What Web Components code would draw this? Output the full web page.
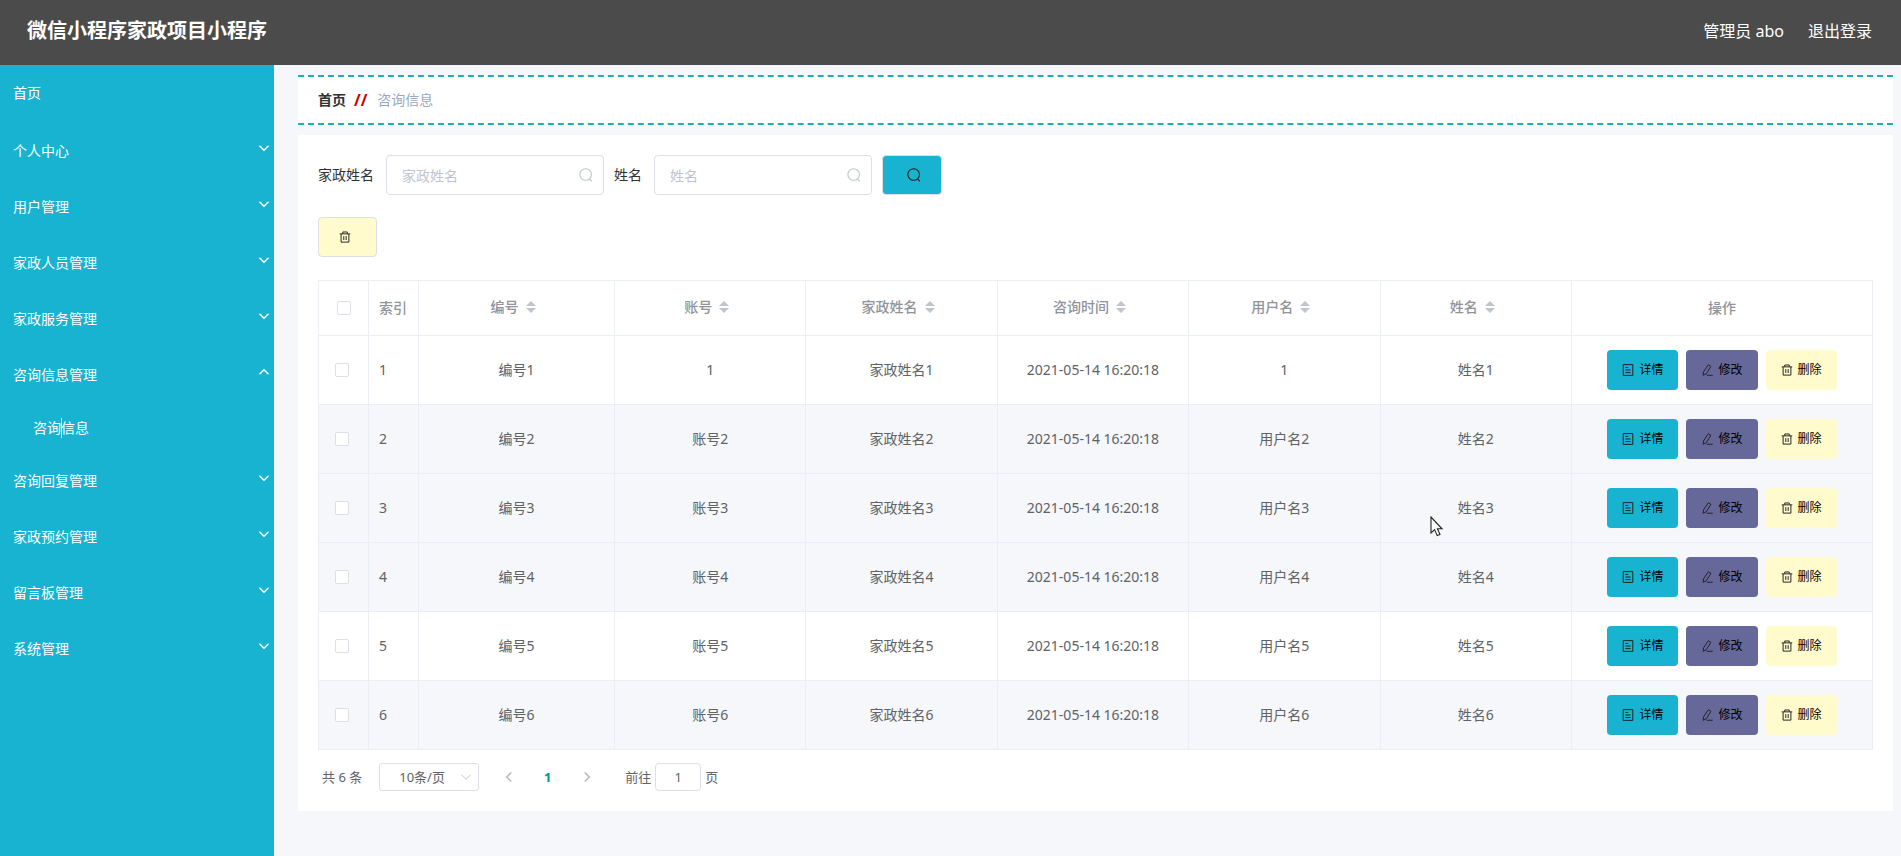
<!DOCTYPE html>
<html lang="zh-CN">
<head>
<meta charset="utf-8">
<title>咨询信息</title>
<style>
html,body{margin:0;height:100%}
body{font-family:"Noto Sans","Noto Sans CJK SC",sans-serif;font-size:14px;color:#303133;background:#f5f7fa}
</style>
</head>
<body>
<admin-app></admin-app>
<script>
const ICONS = {
  search: '<circle cx="7.6" cy="7.4" r="6.6"/><path d="M11.8 12.2l2.8 3"/>',
  trash: '<path d="M1 3.8h14M5 3.6V1.3h6v2.3M2.8 4v10.8h10.4V4M6.4 6.8v5.2M9.6 6.8v5.2"/>',
  doc: '<path d="M1.6.8h12.8v14.4H1.6zM4.6 4.6h3.6M4.6 8h6.8M4.6 11.4h6.8"/>',
  edit: '<path d="M9.8 1l3.4 2.2-6.2 9.8-4.2 2 .6-4.6zM7.6 15h8"/>',
  down: '<path d="M2 5l6 6 6-6"/>',
  up: '<path d="M2 11l6-6 6 6"/>',
  left: '<path d="M11 2L5 8l6 6"/>',
  right: '<path d="M5 2l6 6-6 6"/>'
};
function define(name, html, setup) {
  const template = document.createElement('template');
  customElements.define(name, class extends HTMLElement {
    connectedCallback() {
      if (this.shadowRoot) return;
      template.innerHTML = typeof html === 'function' ? html(this) : html;
      this.attachShadow({mode: 'open'}).append(template.content.cloneNode(true));
      if (setup) setup(this, this.shadowRoot);
    }
  });
}

define('ui-icon', el => `<style>
:host{display:inline-flex;width:12px;height:12px;flex:none}
svg{width:100%;height:100%;fill:none;stroke:currentColor;stroke-width:1.3}
:host([bold]) svg{stroke-width:2}
</style><svg viewBox="0 0 16 16" aria-hidden="true">${ICONS[el.getAttribute('name')]}</svg>`);

define('ui-button', el => `<style>
:host{display:inline-flex}
button{display:flex;align-items:center;justify-content:center;gap:5px;height:40px;padding:0 15px;border:0;border-radius:4px;font:12px/20px "Noto Sans","Noto Sans CJK SC",sans-serif;color:#000;background:#17b3d1;cursor:pointer;white-space:nowrap}
:host([kind=edit]) button{background:#666899}
:host([kind=delete]) button{background:#fffbcc}
:host([square]) button{padding:0 20px;width:59px;border:1px solid #dcdfe6}
:host([square][kind=delete]) button{justify-content:flex-start}
:host([square][kind=view]) button{justify-content:flex-end;width:60px}
:host([square][kind=view]) ui-icon{width:14px;height:14px}
ui-icon{color:#222}
</style><button type="button" aria-label="${el.getAttribute('label') || el.textContent}"><ui-icon name="${el.getAttribute('icon')}"></ui-icon><slot></slot></button>`);

define('app-header', `<style>
:host{display:flex;align-items:center;justify-content:space-between;height:65px;padding:0 29px 4px 27px;box-sizing:border-box;background:#4b4b4b;color:#fff}
h1{margin:0;font-size:20px;line-height:28px}
nav{display:flex;gap:24px;font-size:16px;line-height:24px}
a{color:inherit;text-decoration:none}
</style><h1>微信小程序家政项目小程序</h1><nav><span>管理员 abo</span><a href="#logout">退出登录</a></nav>`);

define('menu-item', el => `<style>
:host{display:block}
a{display:flex;align-items:center;justify-content:space-between;height:56px;padding:0 4px 0 13px;color:#fff;text-decoration:none;line-height:20px}
:host([sub]) a{height:50px;padding-left:33px}
ui-icon{margin-bottom:6px}
</style><a href="#menu"><slot></slot>${el.hasAttribute('arrow') ? `<ui-icon name="${el.getAttribute('arrow')}" bold></ui-icon>` : ''}</a>`);

define('side-menu', `<style>
:host{display:block;background:#17b3d1}
nav{display:flex;flex-direction:column}
.home{margin-bottom:2px}
.sub{position:relative}
.caret{position:absolute;left:61px;top:15px;width:1px;height:20px;background:#d8f4fa}
</style><nav>
<menu-item class="home">首页</menu-item>
<menu-item arrow="down">个人中心</menu-item>
<menu-item arrow="down">用户管理</menu-item>
<menu-item arrow="down">家政人员管理</menu-item>
<menu-item arrow="down">家政服务管理</menu-item>
<menu-item arrow="up">咨询信息管理</menu-item>
<div class="sub"><menu-item sub>咨询信息</menu-item><span class="caret"></span></div>
<menu-item arrow="down">咨询回复管理</menu-item>
<menu-item arrow="down">家政预约管理</menu-item>
<menu-item arrow="down">留言板管理</menu-item>
<menu-item arrow="down">系统管理</menu-item>
</nav>`);

define('bread-crumb', `<style>
:host{display:flex;align-items:center;height:50px;box-sizing:border-box;padding:0 20px;background:#fff;border-top:2px dashed #17b3b3;border-bottom:2px dashed #17b3b3;line-height:20px}
a{color:#303133;font-weight:700;text-decoration:none}
b{color:#c00;font-size:16px;margin:0 10px 0 8px}
span{color:#97a8be}
</style><a href="#home">首页</a><b>//</b><span>咨询信息</span>`);

define('search-field', el => `<style>
:host{display:flex;align-items:center;gap:12px}
label{line-height:20px;white-space:nowrap}
.box{display:flex;align-items:center;width:218px;height:40px;box-sizing:border-box;border:1px solid #dcdfe6;border-radius:4px;padding:0 10px 0 15px;background:#fff}
input{flex:1;min-width:0;padding:0;border:0;outline:0;background:none;font:inherit;color:#606266}
input::placeholder{color:#c0c4cc;opacity:1}
ui-icon{width:14px;height:14px;color:#c0c4cc}
</style><label for="q">${el.getAttribute('label')}</label><div class="box"><input id="q" type="text" placeholder="${el.getAttribute('label')}"><ui-icon name="search"></ui-icon></div>`);

const heads = ['编号', '账号', '家政姓名', '咨询时间', '用户名', '姓名'];
const rows = [1, 2, 3, 4, 5, 6].map(n => [`编号${n}`, n === 1 ? '1' : `账号${n}`, `家政姓名${n}`, '2021-05-14 16:20:18', n === 1 ? '1' : `用户名${n}`, `姓名${n}`]);
define('data-table', `<style>
:host{display:block}
table{width:100%;table-layout:fixed;border-spacing:0;border:solid #ebeef5;border-width:1px 0 0 1px;color:#606266;line-height:22px;box-sizing:border-box}
th,td{box-sizing:border-box;border:solid #ebeef5;border-width:0 1px 1px 0;padding:0;text-align:center}
th{height:55px;color:#909399;font-weight:500}
td{height:69px}
tr.shade td{background:#f5f7fa}
.index{text-align:left;padding-left:10px}
td.pick{padding-right:4px}
.check{width:50px}.number{width:196px}.ops{width:301px}
input{appearance:none;display:block;width:14px;height:14px;margin:0 auto;border:1px solid #dcdfe6;border-radius:2px;background:#fff}
.head{display:flex;align-items:center;justify-content:center;padding-bottom:2px}
.sort{display:flex;flex-direction:column;gap:2px;width:24px;align-items:center}
.sort i{border:5px solid transparent}
.sort i:first-child{border-top:0;border-bottom-color:#c0c4cc}
.sort i:last-child{border-bottom:0;border-top-color:#c0c4cc}
.actions{display:flex;justify-content:center;gap:8px}
</style><table><colgroup><col class="check"><col class="check"><col class="number"><col><col><col><col><col><col class="ops"></colgroup>
<thead><tr><th><input type="checkbox" aria-label="全选"></th><th class="index">索引</th>${heads.map(h => `<th><div class="head">${h}<span class="sort"><i></i><i></i></span></div></th>`).join('')}<th>操作</th></tr></thead>
<tbody>${rows.map((r, i) => `<tr class="${[1, 2, 3, 5].includes(i) ? 'shade' : ''}"><td class="pick"><input type="checkbox" aria-label="选择"></td><td class="index">${i + 1}</td>${r.map(c => `<td>${c}</td>`).join('')}<td><div class="actions"><ui-button kind="view" icon="doc">详情</ui-button><ui-button kind="edit" icon="edit">修改</ui-button><ui-button kind="delete" icon="trash">删除</ui-button></div></td></tr>`).join('')}</tbody></table>`);

define('page-bar', `<style>
:host{display:flex;align-items:center;font-size:13px;line-height:28px;color:#606266;padding-left:4px}
.size{position:relative;display:flex;align-items:center;margin:0 10px 0 17px}
select,input{box-sizing:border-box;height:28px;border:1px solid #dcdfe6;border-radius:3px;background:#fff;color:#606266;font:inherit;line-height:20px}
select{appearance:none;width:100px;padding:0 0 0 19px}
.size ui-icon{position:absolute;right:7px;color:#c0c4cc}
button{display:flex;align-items:center;justify-content:center;width:39px;height:28px;padding:0;border:0;background:none;font:inherit;color:#606266}
button.now{color:#009688;font-weight:700}
button ui-icon{color:#b4b8c0}
label{margin:0 4px 0 19px}
input{width:46px;text-align:center;padding:0;margin-right:4px;border-radius:4px}
</style><span>共 6 条</span><div class="size"><select aria-label="每页条数"><option>10条/页</option></select><ui-icon name="down"></ui-icon></div>
<button type="button" aria-label="上一页"><ui-icon name="left" bold></ui-icon></button><button type="button" class="now">1</button><button type="button" aria-label="下一页"><ui-icon name="right" bold></ui-icon></button>
<label for="page">前往</label><input id="page" type="text" value="1"><span>页</span>`);

define('admin-app', `<style>
:host{display:grid;grid-template:auto 1fr / 274px 1fr;min-height:100%}
app-header{grid-column:1 / -1}
main{display:flex;flex-direction:column;gap:10px;min-width:0;padding:10px 8px 45px 24px}
.card{background:#fff;padding:20px}
form{display:flex;align-items:center;gap:10px;margin-bottom:22px}
data-table{margin:23px 0 13px}
.pointer{position:absolute;left:1430px;top:516px;width:14px;height:21px}
</style><app-header></app-header><side-menu></side-menu>
<main><bread-crumb></bread-crumb><section class="card">
<form><search-field label="家政姓名"></search-field><search-field label="姓名"></search-field><ui-button square kind="view" icon="search" label="查询"></ui-button></form>
<ui-button square kind="delete" icon="trash" label="批量删除"></ui-button>
<data-table></data-table><page-bar></page-bar></section></main>
<svg class="pointer" viewBox="0 0 14 21" aria-hidden="true"><path d="M1 1v16l3.6-3.4 2.6 6 2.8-1.2-2.6-5.6H12z" fill="#fff" stroke="#222" stroke-width="1.1"/></svg>`);
</script>
</body>
</html>
